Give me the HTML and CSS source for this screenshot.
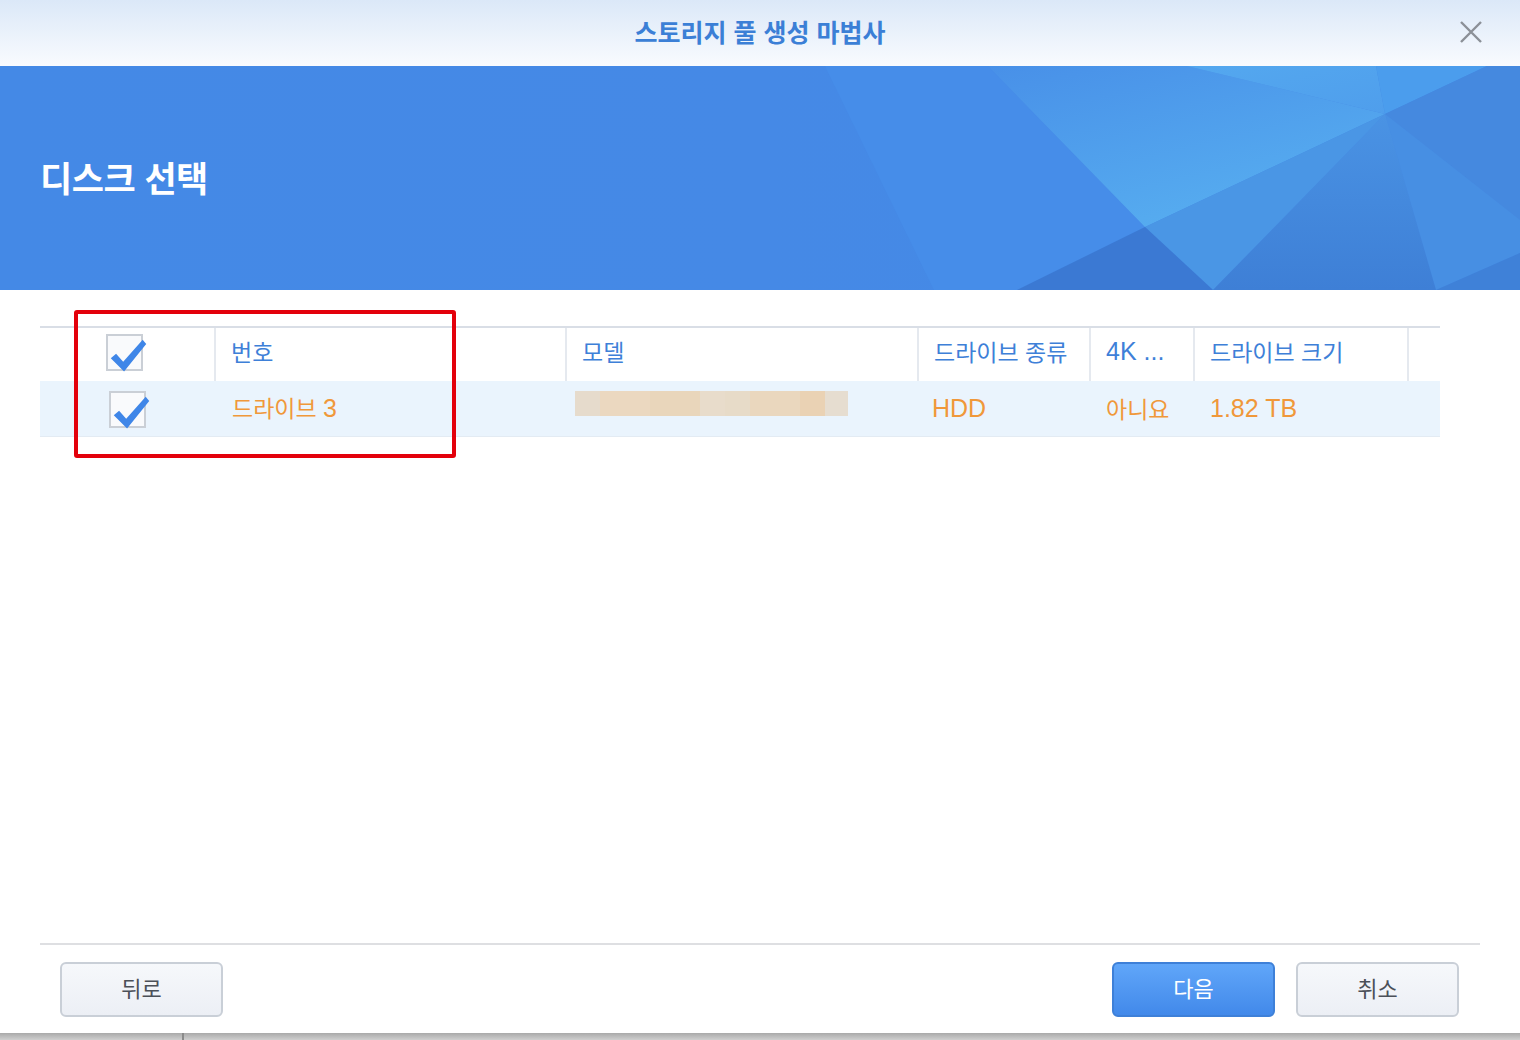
FILE: index.html
```html
<!DOCTYPE html>
<html lang="ko">
<head>
<meta charset="utf-8">
<title>스토리지 풀 생성 마법사</title>
<link rel="stylesheet" href="styles.css">
</head>
<body>
<div class="dialog">
  <header class="titlebar">
    <h1 class="title">스토리지 풀 생성 마법사</h1>
    <button class="close" aria-label="닫기">
      <svg viewBox="0 0 24 24" width="24" height="24"><path d="M2 2 L22 22 M22 2 L2 22" stroke="#8b9097" stroke-width="2.4" fill="none"/></svg>
    </button>
  </header>

  <section class="banner">
    <svg class="banner-art" viewBox="0 0 1520 224" preserveAspectRatio="none">
      <defs>
        <linearGradient id="gBase" x1="0" y1="0" x2="1" y2="0">
          <stop offset="0" stop-color="#4489e6"/>
          <stop offset="0.5" stop-color="#4589e6"/>
          <stop offset="1" stop-color="#458ae4"/>
        </linearGradient>
        <linearGradient id="gMid" x1="0" y1="0" x2="0.6" y2="1">
          <stop offset="0" stop-color="#4890e8"/>
          <stop offset="1" stop-color="#57aef0"/>
        </linearGradient>
        <linearGradient id="gTop" x1="0" y1="0" x2="1" y2="1">
          <stop offset="0" stop-color="#54a8ef"/>
          <stop offset="1" stop-color="#4f9eec"/>
        </linearGradient>
        <linearGradient id="gLow" x1="0" y1="0" x2="0" y2="1">
          <stop offset="0" stop-color="#4a93e4"/>
          <stop offset="1" stop-color="#3e7fd6"/>
        </linearGradient>
      </defs>
      <rect x="0" y="0" width="1520" height="224" fill="url(#gBase)"/>
      <polygon points="825,0 988,0 1145,161 1017,224 934,224" fill="#468de9"/>
      <polygon points="988,0 1187,0 1385,48 1145,161" fill="url(#gMid)"/>
      <polygon points="1187,0 1376,0 1385,48" fill="url(#gTop)"/>
      <polygon points="1376,0 1487,0 1385,48" fill="#4b9ded"/>
      <polygon points="1487,0 1520,0 1520,154 1385,48" fill="#4589df"/>
      <polygon points="1385,48 1520,154 1520,187 1436,224" fill="#478fe3"/>
      <polygon points="1145,161 1385,48 1213,224" fill="#4a96e5"/>
      <polygon points="1017,224 1145,161 1213,224" fill="#3b79d3"/>
      <polygon points="1385,48 1436,224 1213,224" fill="url(#gLow)"/>
      <polygon points="1436,224 1520,187 1520,224" fill="#3f81d8"/>
    </svg>
    <h2 class="banner-title">디스크 선택</h2>
  </section>

  <main class="content">
    <div class="grid">
      <div class="row head">
        <div class="cell cb-cell"><span class="cbox head-cb"><svg class="check" viewBox="0 0 44 44"><path d="M2 24 L8 19 L16 28 L38 3 L42 8 L17 39 Z" fill="#3f86e8"/></svg></span></div>
        <div class="cell"><span>번호</span></div>
        <div class="cell"><span>모델</span></div>
        <div class="cell"><span>드라이브 종류</span></div>
        <div class="cell"><span class="lat">4K ...</span></div>
        <div class="cell"><span>드라이브 크기</span></div>
        <div class="cell"></div>
      </div>
      <div class="row body">
        <div class="cell cb-cell"><span class="cbox row-cb"><svg class="check" viewBox="0 0 44 44"><path d="M2 24 L8 19 L16 28 L38 3 L42 8 L17 39 Z" fill="#3f86e8"/></svg></span></div>
        <div class="cell num"><span>드라이브 <span class="lat">3</span></span></div>
        <div class="cell model"><span class="blur"><i></i><i></i><i></i><i></i><i></i><i></i><i></i><i></i></span></div>
        <div class="cell type"><span class="lat">HDD</span></div>
        <div class="cell"><span>아니요</span></div>
        <div class="cell"><span class="lat">1.82 TB</span></div>
        <div class="cell"></div>
      </div>
    </div>
    <div class="highlight"></div>
  </main>

  <footer class="footer">
    <button class="btn">뒤로</button>
    <div class="spacer"></div>
    <button class="btn primary">다음</button>
    <button class="btn">취소</button>
  </footer>
</div>
<div class="backdrop"><span class="edge"></span></div>
</body>
</html>
```

FILE: styles.css
```css
* { box-sizing: border-box; }
html, body { margin: 0; padding: 0; }
body {
  width: 1520px;
  height: 1040px;
  overflow: hidden;
  font-family: "Noto Sans CJK KR", "Noto Sans", sans-serif;
  background: #fff;
}
.dialog {
  width: 1520px;
  height: 1033px;
  display: flex;
  flex-direction: column;
  background: #fff;
}
.titlebar {
  height: 66px;
  flex: none;
  display: flex;
  align-items: center;
  justify-content: center;
  position: relative;
  padding-bottom: 4px;
  background: linear-gradient(#dbe8f8, #f9fbfe);
}
.title {
  margin: 0;
  font-size: 25px;
  font-weight: 700;
  color: #3b7fd6;
  line-height: 1;
}
.close {
  position: absolute;
  right: 37px;
  top: 20px;
  width: 24px;
  height: 24px;
  padding: 0;
  border: 0;
  background: none;
  display: flex;
}
.banner {
  height: 224px;
  flex: none;
  position: relative;
  display: flex;
  align-items: center;
  overflow: hidden;
  background: #4589e6;
}
.banner-art {
  position: absolute;
  left: 0;
  top: 0;
  width: 1520px;
  height: 224px;
}
.banner-title {
  position: relative;
  margin: 0 0 4px 40px;
  color: #fff;
  font-size: 35px;
  font-weight: 700;
  line-height: 1;
  letter-spacing: -0.5px;
}
.content {
  flex: 1;
  position: relative;
  padding-top: 36px;
  margin: 0 40px 0 40px;
  border-bottom: 2px solid #dedfe2;
}
.grid {
  width: 1400px;
}
.row {
  display: grid;
  grid-template-columns: 174px 351px 352px 172px 104px 214px 33px;
}
.row.head {
  height: 55px;
  border-top: 2px solid #d9dee6;
  color: #3e80d8;
}
.row.body {
  height: 56px;
  background: #eaf4fd;
  border-bottom: 1px solid #e3ebf3;
  color: #f0983a;
}
.cell {
  display: flex;
  align-items: center;
  padding-left: 17px;
  font-size: 23px;
  line-height: 1;
  white-space: nowrap;
}
.row.head .cell > span { margin-top: -6px; }
.row.body .cell > span { margin-top: 0; }
.lat {
  font-family: "Liberation Sans", "Noto Sans", sans-serif;
  font-size: 25px;
}
.row.head .cell + .cell {
  border-left: 2px solid #e5e9ef;
}
.row.head .cell + .cell { padding-left: 15px; }
.row.body .cell.num { padding-left: 18px; }
.row.body .cell.type { padding-left: 15px; }
.cb-cell { padding-left: 0; }
.cbox {
  position: relative;
  width: 37px;
  height: 37px;
  border: 2px solid #cacfd6;
  background: #f9fafc;
}
.row.head .cell > .head-cb { margin-left: 66px; margin-top: -4px; }
.row.body .cell > .row-cb { margin-left: 69px; margin-top: 1px; }
.check {
  position: absolute;
  left: 1px;
  top: 1px;
  width: 39px;
  height: 39px;
}
.model { padding-left: 10px; }
.row.body .model > .blur {
  display: flex;
  height: 25px;
  margin-top: -10px;
}
.blur i { display: block; height: 25px; }
.blur i:nth-child(1) { width: 25px; background: #e6dbcc; }
.blur i:nth-child(2) { width: 50px; background: #ebd8c0; }
.blur i:nth-child(3) { width: 50px; background: #e9d6bb; }
.blur i:nth-child(4) { width: 25px; background: #e8dccb; }
.blur i:nth-child(5) { width: 25px; background: #e7dbc8; }
.blur i:nth-child(6) { width: 50px; background: #ead7be; }
.blur i:nth-child(7) { width: 25px; background: #ead2b4; }
.blur i:nth-child(8) { width: 23px; background: #e6ddd0; }
.highlight {
  position: absolute;
  left: 34px;
  top: 20px;
  width: 382px;
  height: 148px;
  border: 4px solid #e3000b;
  border-radius: 3px;
  pointer-events: none;
}
.footer {
  height: 88px;
  flex: none;
  display: flex;
  align-items: flex-start;
  padding: 17px 61px 0 60px;
  gap: 21px;
}
.spacer { flex: 1; }
.btn {
  width: 163px;
  height: 55px;
  border: 2px solid #c9cfd7;
  border-radius: 6px;
  background: linear-gradient(#f6f8fb, #eceff5);
  color: #4b5058;
  font-family: "Noto Sans CJK KR", "Noto Sans", sans-serif;
  font-size: 22px;
  line-height: 1;
  padding: 0 0 6px;
}
.btn.primary {
  background: linear-gradient(#60a6f9, #4289ea);
  border-color: #3e80d8;
  color: #fff;
}
.backdrop {
  height: 7px;
  position: relative;
  background: linear-gradient(#a9a9a9, #cfcfcf);
}
.backdrop .edge {
  position: absolute;
  left: 182px;
  top: 0;
  width: 2px;
  height: 7px;
  background: #8a8a8a;
}
```
